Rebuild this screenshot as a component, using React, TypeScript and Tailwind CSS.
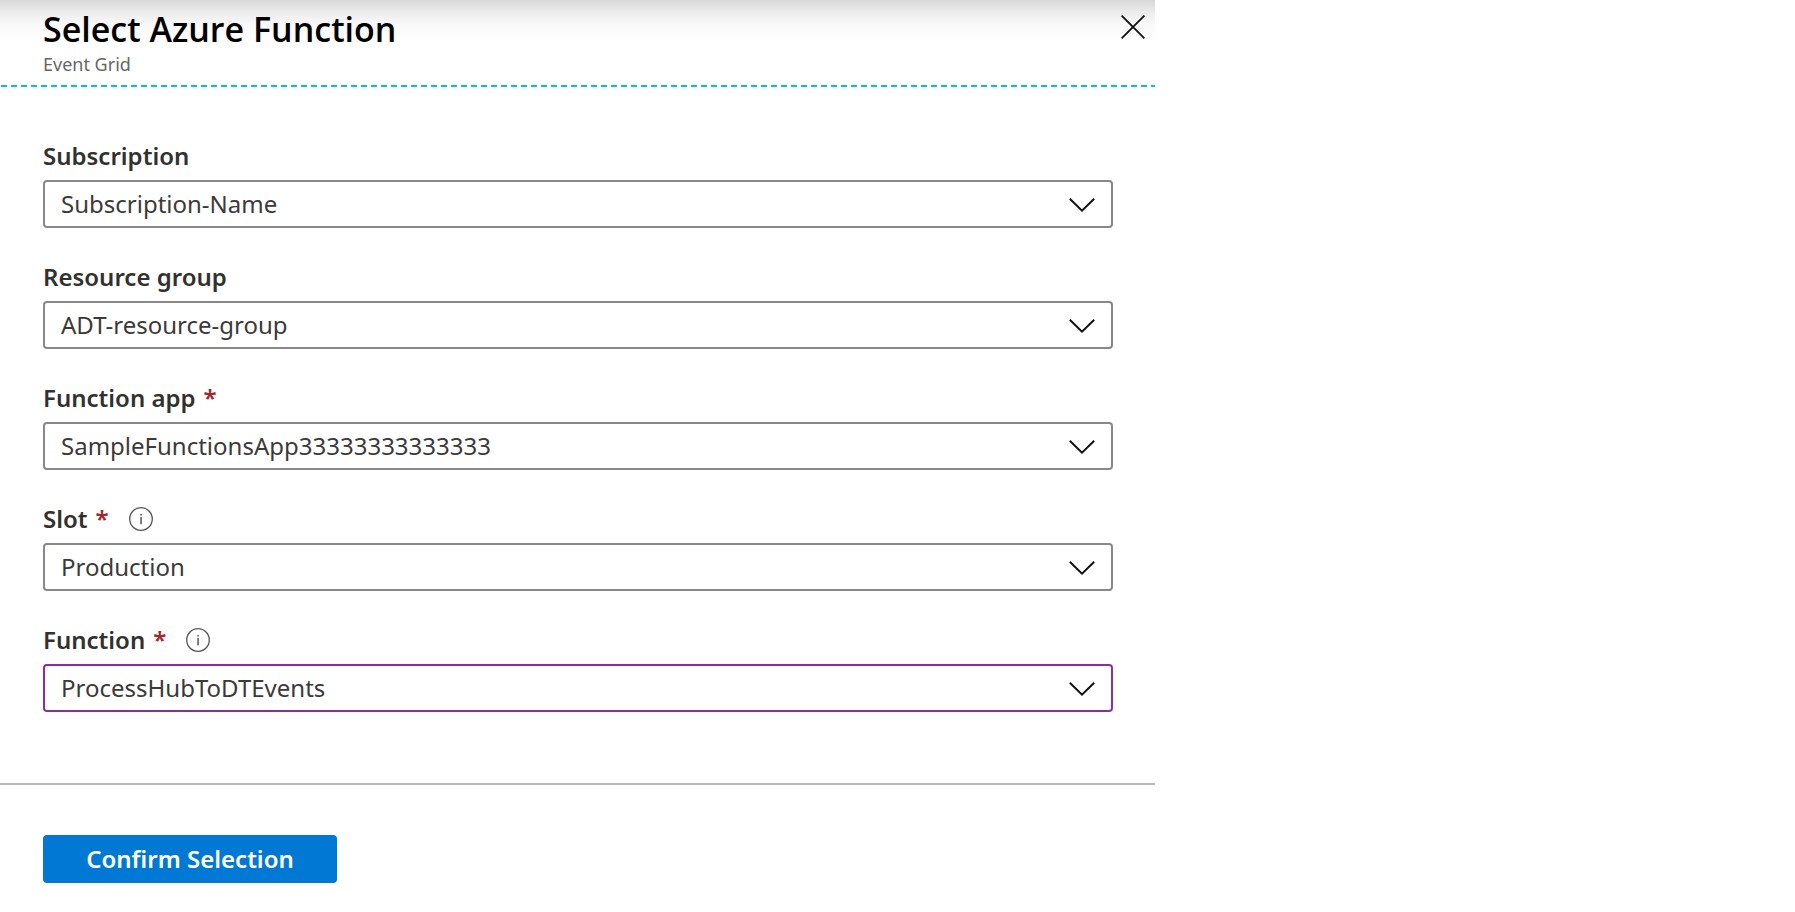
import { useState } from "react";

type Field = {
  id: string;
  label: string;
  options: string[];
  required?: boolean;
  info?: boolean;
  active?: boolean;
};

const fields: Field[] = [
  { id: "subscription", label: "Subscription", options: ["Subscription-Name"] },
  { id: "resource-group", label: "Resource group", options: ["ADT-resource-group"] },
  { id: "function-app", label: "Function app", options: ["SampleFunctionsApp33333333333333"], required: true },
  { id: "slot", label: "Slot", options: ["Production"], required: true, info: true },
  { id: "function", label: "Function", options: ["ProcessHubToDTEvents"], required: true, info: true, active: true },
];

function CloseIcon() {
  return (
    <svg width="24" height="24" viewBox="0 0 24 24" fill="none" stroke="#111111" strokeWidth="1.8" aria-hidden="true">
      <path d="M0.6 0.6 23.4 23.4M23.4 0.6 0.6 23.4" />
    </svg>
  );
}

function ChevronIcon() {
  return (
    <svg
      className="pointer-events-none absolute top-[18px] right-[18px]"
      width="26"
      height="14"
      viewBox="0 0 26 14"
      fill="none"
      stroke="#111111"
      strokeWidth="2"
      aria-hidden="true"
    >
      <path d="M0.8 0.8 13 12.6 25.2 0.8" />
    </svg>
  );
}

function InfoIcon() {
  return (
    <svg width="24" height="24" viewBox="0 0 24 24" aria-hidden="true">
      <circle cx="12" cy="12" r="11.3" fill="none" stroke="#555555" strokeWidth="1.3" />
      <rect x="11.3" y="7" width="1.5" height="1.6" fill="#555555" />
      <rect x="11.3" y="10" width="1.5" height="7.3" fill="#555555" />
    </svg>
  );
}

function SelectField({ field }: { field: Field }) {
  const [value, setValue] = useState(field.options[0]);
  return (
    <div>
      <div className="flex h-9 items-center gap-5">
        <label htmlFor={field.id} className="flex gap-2 text-2xl leading-9 font-semibold text-[#323130]">
          {field.label}
          {field.required && <span className="text-[#a4262c]">*</span>}
        </label>
        {field.info && (
          <button type="button" aria-label={`About ${field.label}`}>
            <InfoIcon />
          </button>
        )}
      </div>
      <div className="relative mt-[6px]">
        <select
          id={field.id}
          value={value}
          onChange={(e) => setValue(e.target.value)}
          className={
            "h-12 w-full appearance-none rounded-[4px] border-2 bg-white px-4 text-2xl text-[#3b3a39] outline-none " +
            (field.active ? "border-[#8a2da5]" : "border-[#8a8886]")
          }
        >
          {field.options.map((o) => (
            <option key={o}>{o}</option>
          ))}
        </select>
        <ChevronIcon />
      </div>
    </div>
  );
}

export default function App() {
  return (
    <main className="w-full max-w-[1155px] bg-white font-['Noto_Sans',sans-serif]">
      <header className="flex items-start justify-between bg-[linear-gradient(to_bottom,#d8d8d8_0px,#ececec_12px,#f8f8f8_24px,#ffffff_42px)] pt-[6px] pr-[10px] pb-[9px] pl-[43px]">
        <div>
          <h1 className="font-['Open_Sans',sans-serif] text-[34px] leading-[46px] font-semibold text-black">
            Select Azure Function
          </h1>
          <p className="text-lg leading-6 text-[#666666]">Event Grid</p>
        </div>
        <button type="button" aria-label="Close" className="mt-[9px]">
          <CloseIcon />
        </button>
      </header>
      <div className="h-0.5 bg-[repeating-linear-gradient(to_right,transparent_0px,transparent_1px,#00bcf2_1px,#00bcf2_7px,transparent_7px,transparent_10px)]" />
      <form onSubmit={(e) => e.preventDefault()}>
        <div className="flex flex-col gap-[31px] pt-[51px] pr-[42px] pb-[71px] pl-[43px]">
          {fields.map((f) => (
            <SelectField key={f.id} field={f} />
          ))}
        </div>
        <footer className="border-t-2 border-[#b9b9b9] pt-[50px] pb-7 pl-[43px]">
          <button type="submit" className="h-12 w-[294px] rounded-[4px] bg-[#0078d4] text-2xl font-semibold text-white">
            Confirm Selection
          </button>
        </footer>
      </form>
    </main>
  );
}
